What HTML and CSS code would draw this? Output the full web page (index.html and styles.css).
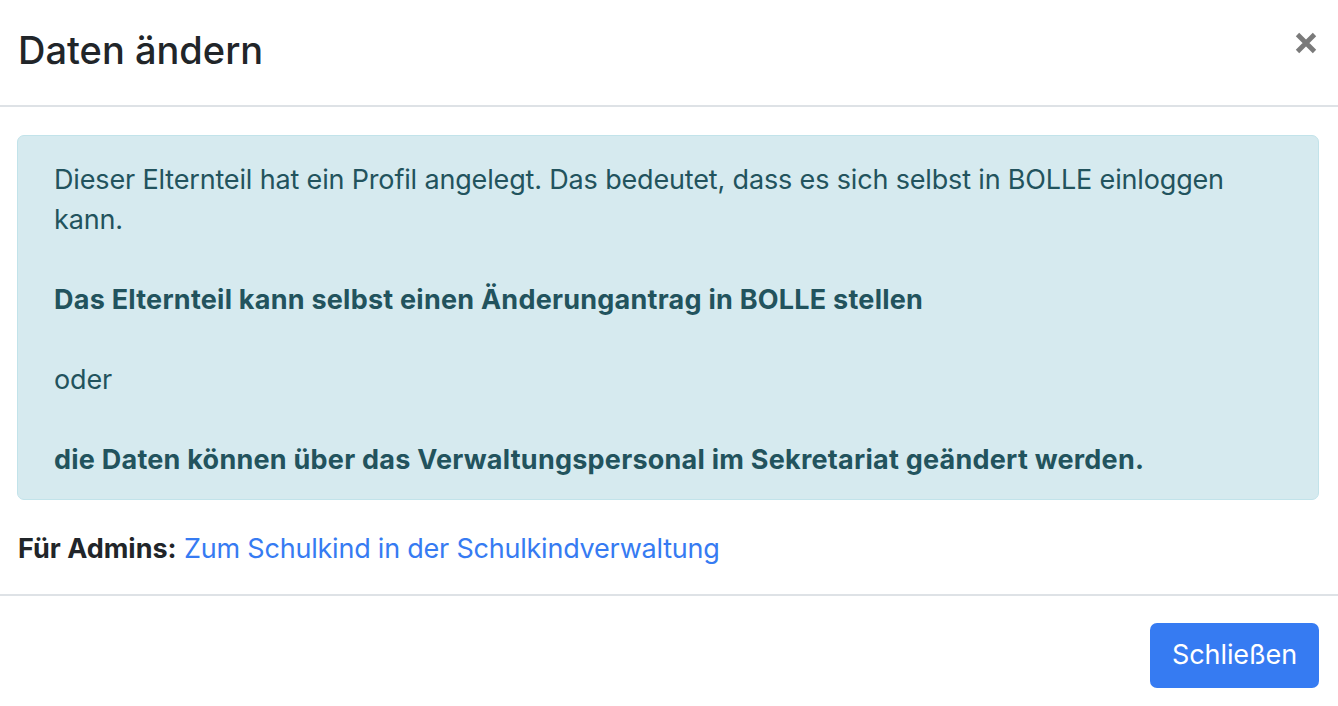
FILE: index.html
```html
<!DOCTYPE html>
<html lang="de">
<head>
  <meta charset="UTF-8"/>
  <title>Daten ändern</title>
  <link rel="stylesheet" href="styles.css">
</head>
<body>

<div class="modal">
  <div class="modal-header">
    <h4 class="modal-title">Daten ändern</h4>
    <button class="close" type="button" aria-label="Close">
      <svg width="24" height="24" viewBox="0 0 24 24">
        <path d="M3.5 3.5 L20.5 20.5 M20.5 3.5 L3.5 20.5" stroke="#7a7a7a" stroke-width="4.8" fill="none"/>
      </svg>
    </button>
  </div>

  <div class="modal-body">
    <div class="alert-info">
      Dieser Elternteil hat ein Profil angelegt. Das bedeutet, dass es sich selbst in BOLLE einloggen kann.
      <br><br>
      <b>Das Elternteil kann selbst einen Änderungantrag in BOLLE stellen</b>
      <br><br>
      oder
      <br><br>
      <b>die Daten können über das Verwaltungspersonal im Sekretariat geändert werden.</b>
    </div>
    <div class="admin-line">
      <b>Für Admins:</b> <a href="#">Zum Schulkind in der Schulkindverwaltung</a>
    </div>
  </div>

  <div class="modal-footer">
    <button class="btn-primary" type="button">Schließen</button>
  </div>
</div>

</body>
</html>
```

FILE: styles.css
```css
body {
  margin: 0;
  padding: 0;
  background-color: #fff;
  font-family: Inter, "Noto Sans", sans-serif;
  font-size: 27px;
  line-height: 40px;
  letter-spacing: -0.16px;
  color: #212529;
}

.modal {
  width: 100%;
}

.modal-header {
  display: flex;
  justify-content: space-between;
  align-items: center;
  height: 107px;
  padding: 0 21px 0 18px;
  box-sizing: border-box;
  border-bottom: 2px solid #dee2e6;
}

.modal-title {
  margin: 0;
  font-size: 38px;
  font-weight: 500;
  line-height: 50px;
  letter-spacing: 0;
  color: #212529;
  padding-bottom: 6px;
}

.close {
  background: none;
  border: none;
  padding: 0;
  margin-top: -20px;
  margin-right: -1px;
  cursor: pointer;
  display: flex;
}

.modal-body {
  padding: 28px 19px 25px 17px;
}

.alert-info {
  background-color: #d6eaef;
  border: 1px solid #c2e3ea;
  border-radius: 7px;
  color: #22535d;
  padding: 24px 36px 19px 36px;
}

.alert-info b {
  font-weight: 700;
  letter-spacing: 0.24px;
}

.admin-line {
  margin-top: 29px;
  padding-left: 1px;
}

.admin-line b {
  font-weight: 700;
  letter-spacing: 0;
}

.admin-line a {
  color: #367bf2;
  text-decoration: none;
  letter-spacing: -0.22px;
}

.modal-footer {
  display: flex;
  justify-content: flex-end;
  border-top: 2px solid #dee2e6;
  padding: 27px 19px 18px;
}

.btn-primary {
  background-color: #367bf2;
  color: #fff;
  border: none;
  border-radius: 7px;
  font-family: Inter, "Noto Sans", sans-serif;
  font-size: 27px;
  line-height: 40px;
  letter-spacing: -0.1px;
  padding: 12px 22px 13px;
  cursor: pointer;
}
```
